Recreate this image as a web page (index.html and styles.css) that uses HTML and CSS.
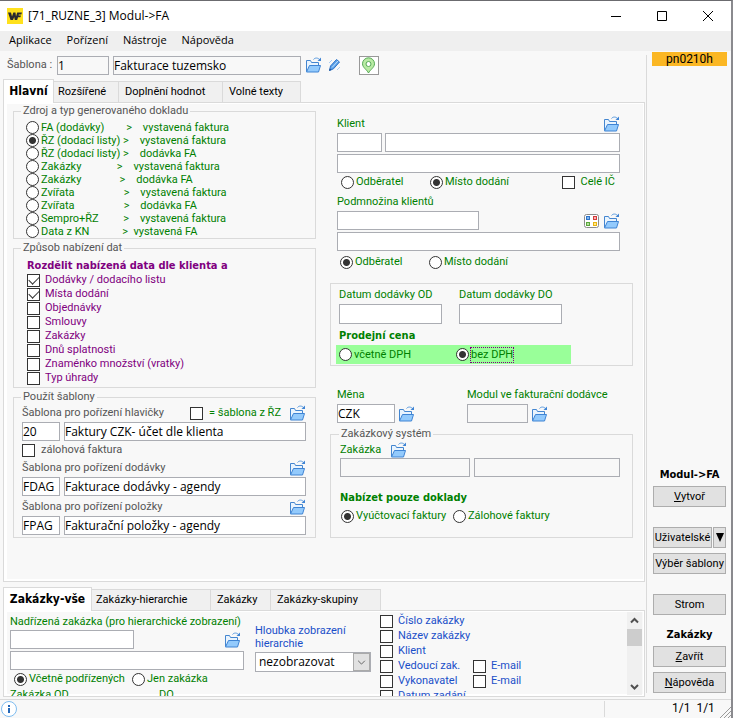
FILE: index.html
```html
<!DOCTYPE html>
<html lang="cs">
<head>
  <meta charset="UTF-8">
  <meta name="viewport" content="width=device-width, initial-scale=1.0">
  <title>[71_RUZNE_3] Modul-&gt;FA</title>
  <link rel="stylesheet" href="styles.css">
</head>
<body>
  <svg class="sprite" aria-hidden="true">
    <symbol id="folder" viewBox="0 0 17 16">
      <path d="M1.500 14.500V3.500H5.500L6.500 5.500H13.500V8.500" fill="#e9f4fe" stroke="#4486d0"/>
      <path d="M1.500 15L4.500 8.500H15.500L13.500 15Z" fill="#93cafc" stroke="#3f84d4"/>
      <path d="M8.500 2.500C10 .5 13 .5 15 3" fill="none" stroke="#5a9be0"/>
      <path d="M16 .5V4H12.500Z" fill="#3f84d4"/>
    </symbol>
  </svg>

  <header class="titlebar">
    <svg class="logo" viewBox="0 0 16 16" aria-hidden="true">
      <rect width="16" height="16" fill="#ffe11c"/>
      <path d="M1 4.500H4L5 8.500L6.300 4.500H8.500L9 8.500L10.200 4.500H15L14.300 6.500H11.800L11.600 7.500H14L13.400 9.300H11L10.200 12H7.800L7.200 9L6 12H3.500Z" fill="#2a2a30"/>
    </svg>
    <h1>[71_RUZNE_3] Modul-&gt;FA</h1>
    <button class="win-btn" title="Minimalizovat"><svg viewBox="0 0 10 10"><path d="M0 5.500H10"/></svg></button>
    <button class="win-btn" title="Maximalizovat"><svg viewBox="0 0 10 10"><path d="M.5 .5H9.500V9.500H.5Z"/></svg></button>
    <button class="win-btn" title="Zavřít okno"><svg viewBox="0 0 10 10"><path d="M0 0L10 10M10 0L0 10"/></svg></button>
  </header>

  <nav class="menu">
    <a href="#">Aplikace</a>
    <a href="#">Pořízení</a>
    <a href="#">Nástroje</a>
    <a href="#">Nápověda</a>
  </nav>

  <div class="body">
    <main class="main">
      <div class="toolbar">
        <label for="tplCode">Šablona :</label>
        <input type="text" id="tplCode" class="w-52" value="1" readonly>
        <input type="text" class="w-188" value="Fakturace tuzemsko" aria-label="Název šablony" readonly>
        <button class="icon-btn" title="Otevřít"><svg><use href="#folder"/></svg></button>
        <button class="icon-btn" title="Upravit">
          <svg viewBox="0 0 17 16">
            <path d="M4.500 9L10.500 2.500L13.500 5L7.500 11.800L3.500 13.500Z" fill="#5aa0e8" stroke="#2f74c8"/>
            <path d="M6 10.500L12 4" stroke="#bfe0ff"/>
            <path d="M3 13.800L3.800 11.500L5.500 13Z" fill="#1d4f94"/>
            <path d="M3 6L6 3M11 13L14 10" stroke="#a8cdf4"/>
          </svg>
        </button>
        <button class="pin-btn" title="Mapa">
          <svg viewBox="0 0 17 17">
            <path d="M8.500 16C7 12.800 2.500 10.500 2.500 6.800A6 6 0 0 1 14.500 6.800C14.500 10.500 10 12.800 8.500 16Z" fill="#b9eba4" stroke="#55a955"/>
            <circle cx="8.500" cy="7" r="2.500" fill="#fff" stroke="#55a955"/>
          </svg>
        </button>
      </div>

      <div class="tabs" role="tablist">
        <button role="tab" class="tab active t-51">Hlavní</button>
        <button role="tab" class="tab t-65">Rozšířené</button>
        <button role="tab" class="tab t-104">Doplnění hodnot</button>
        <button role="tab" class="tab t-78">Volné texty</button>
      </div>

      <section class="panel columns">
        <div class="col">
          <fieldset class="green source">
            <legend>Zdroj a typ generovaného dokladu</legend>
            <label><input type="radio" name="src">FA (dodávky)        &gt;    vystavená faktura</label>
            <label><input type="radio" name="src" checked>ŘZ (dodací listy) &gt;    vystavená faktura</label>
            <label><input type="radio" name="src">ŘZ (dodací listy) &gt;    dodávka FA</label>
            <label><input type="radio" name="src">Zakázky             &gt;    vystavená faktura</label>
            <label><input type="radio" name="src">Zakázky              &gt;    dodávka FA</label>
            <label><input type="radio" name="src">Zvířata                  &gt;    vystavená faktura</label>
            <label><input type="radio" name="src">Zvířata                  &gt;    dodávka FA</label>
            <label><input type="radio" name="src">Sempro+ŘZ         &gt;    vystavená faktura</label>
            <label><input type="radio" name="src">Data z KN            &gt;  vystavená FA</label>
          </fieldset>

          <fieldset class="purple split">
            <legend>Způsob nabízení dat</legend>
            <h2>Rozdělit nabízená data dle klienta a</h2>
            <label><input type="checkbox" checked>Dodávky / dodacího listu</label>
            <label><input type="checkbox" checked>Místa dodání</label>
            <label><input type="checkbox">Objednávky</label>
            <label><input type="checkbox">Smlouvy</label>
            <label><input type="checkbox">Zakázky</label>
            <label><input type="checkbox">Dnů splatnosti</label>
            <label><input type="checkbox">Znaménko množství (vratky)</label>
            <label><input type="checkbox">Typ úhrady</label>
          </fieldset>

          <fieldset class="templates">
            <legend>Použít šablony</legend>
            <div class="row head">
              <label for="tHead" class="grow">Šablona pro pořízení hlavičky</label>
              <label class="check green"><input type="checkbox">= šablona z ŘZ</label>
              <button class="icon-btn" title="Otevřít"><svg><use href="#folder"/></svg></button>
            </div>
            <div class="row fields">
              <input type="text" id="tHead" class="w-38" value="20">
              <input type="text" class="grow" value="Faktury CZK- účet dle klienta" aria-label="Název hlavičky">
            </div>
            <div class="row note"><label class="check"><input type="checkbox">zálohová faktura</label></div>
            <div class="row head">
              <label for="tDel" class="grow">Šablona pro pořízení dodávky</label>
              <button class="icon-btn" title="Otevřít"><svg><use href="#folder"/></svg></button>
            </div>
            <div class="row fields">
              <input type="text" id="tDel" class="w-38" value="FDAG">
              <input type="text" class="grow" value="Fakturace dodávky - agendy" aria-label="Název dodávky">
            </div>
            <div class="row head spaced">
              <label for="tItem" class="grow">Šablona pro pořízení položky</label>
              <button class="icon-btn" title="Otevřít"><svg><use href="#folder"/></svg></button>
            </div>
            <div class="row fields">
              <input type="text" id="tItem" class="w-38" value="FPAG">
              <input type="text" class="grow" value="Fakturační položky - agendy" aria-label="Název položky">
            </div>
          </fieldset>
        </div>

        <div class="col green">
          <div class="clients">
            <div class="row head">
              <label for="client" class="grow">Klient</label>
              <button class="icon-btn" title="Otevřít"><svg><use href="#folder"/></svg></button>
            </div>
            <div class="row pair">
              <input type="text" id="client" class="w-45">
              <input type="text" class="grow" aria-label="Název klienta">
            </div>
            <input type="text" class="full" aria-label="Adresa klienta">
            <div class="options">
              <label><input type="radio" name="cl">Odběratel</label>
              <label class="grow"><input type="radio" name="cl" checked>Místo dodání</label>
              <label class="check"><input type="checkbox">Celé IČ</label>
            </div>
            <div class="row head"><label for="subset">Podmnožina klientů</label></div>
            <div class="row">
              <input type="text" id="subset" class="w-142">
              <span class="grow"></span>
              <button class="icon-btn" title="Výběr">
                <svg viewBox="0 0 17 16">
                  <rect x="1.500" y="1.500" width="14" height="13" rx="2" fill="#fff" stroke="#8b8b8b"/>
                  <rect x="3.500" y="3.500" width="3" height="3" fill="#7db4f0" stroke="#2f74c8"/>
                  <rect x="10.500" y="3.500" width="3" height="3" fill="#f9b4b4" stroke="#d23a3a"/>
                  <rect x="3.500" y="9.500" width="3" height="3" fill="#b6e0a0" stroke="#5ba63c"/>
                  <rect x="10.500" y="9.500" width="3" height="3" fill="#ffe88a" stroke="#e8b410"/>
                </svg>
              </button>
              <button class="icon-btn" title="Otevřít"><svg><use href="#folder"/></svg></button>
            </div>
            <input type="text" class="full" aria-label="Popis podmnožiny">
            <div class="options low">
              <label><input type="radio" name="sub" checked>Odběratel</label>
              <label><input type="radio" name="sub">Místo dodání</label>
            </div>
          </div>

          <div class="box dates">
            <div class="date-grid">
              <label for="dFrom">Datum dodávky OD</label>
              <label for="dTo">Datum dodávky DO</label>
              <input type="text" id="dFrom">
              <input type="text" id="dTo">
            </div>
            <h2>Prodejní cena</h2>
            <div class="price">
              <label><input type="radio" name="price">včetně DPH</label>
              <label><input type="radio" name="price" checked><span class="focused">bez DPH</span></label>
            </div>
          </div>

          <div class="currency">
            <label for="cur">Měna</label>
            <label for="mod">Modul ve fakturační dodávce</label>
            <div class="row">
              <input type="text" id="cur" class="w-58" value="CZK">
              <button class="icon-btn" title="Otevřít"><svg><use href="#folder"/></svg></button>
            </div>
            <div class="row">
              <input type="text" id="mod" class="w-61" readonly>
              <button class="icon-btn" title="Otevřít"><svg><use href="#folder"/></svg></button>
            </div>
          </div>

          <fieldset class="orders">
            <legend>Zakázkový systém</legend>
            <div class="row head">
              <label for="ord">Zakázka</label>
              <button class="icon-btn" title="Otevřít"><svg><use href="#folder"/></svg></button>
            </div>
            <div class="row fields">
              <input type="text" id="ord" class="w-130" readonly>
              <input type="text" class="grow" aria-label="Název zakázky" readonly>
            </div>
            <h2>Nabízet pouze doklady</h2>
            <div class="options docs">
              <label><input type="radio" name="docs" checked>Vyúčtovací faktury</label>
              <label><input type="radio" name="docs">Zálohové faktury</label>
            </div>
          </fieldset>
        </div>
      </section>

      <div class="tabs lower" role="tablist">
        <button role="tab" class="tab active t-89">Zakázky-vše</button>
        <button role="tab" class="tab t-119">Zakázky-hierarchie</button>
        <button role="tab" class="tab t-60">Zakázky</button>
        <button role="tab" class="tab t-110">Zakázky-skupiny</button>
      </div>

      <section class="panel filter">
        <div class="parent green">
          <label for="par" class="title">Nadřízená zakázka (pro hierarchické zobrazení)</label>
          <div class="row picker">
            <input type="text" id="par" class="w-124">
            <button class="icon-btn" title="Otevřít"><svg><use href="#folder"/></svg></button>
          </div>
          <input type="text" class="full" aria-label="Název nadřízené zakázky">
          <div class="options">
            <label><input type="radio" name="par" checked>Včetně podřízených</label>
            <label><input type="radio" name="par">Jen zakázka</label>
          </div>
          <div class="range"><span>Zakázka OD</span><span>DO</span></div>
        </div>
        <div class="depth blue">
          <label for="depth">Hloubka zobrazení hierarchie</label>
          <div class="select">
            <select id="depth"><option>nezobrazovat</option></select>
            <svg viewBox="0 0 17 19" aria-hidden="true"><path d="M4.500 8L8.500 12L12.500 8" fill="none" stroke="#505050"/></svg>
          </div>
        </div>
        <div class="shown blue">
          <label class="check wide"><input type="checkbox">Číslo zakázky</label>
          <label class="check wide"><input type="checkbox">Název zakázky</label>
          <label class="check wide"><input type="checkbox">Klient</label>
          <label class="check"><input type="checkbox">Vedoucí zak.</label>
          <label class="check"><input type="checkbox">E-mail</label>
          <label class="check"><input type="checkbox">Vykonavatel</label>
          <label class="check"><input type="checkbox">E-mail</label>
          <label class="check wide"><input type="checkbox">Datum zadání</label>
        </div>
        <div class="scroll" aria-hidden="true">
          <svg viewBox="0 0 15 17"><path d="M4 10.500L7.500 7L11 10.500" fill="none" stroke="#505050" stroke-width="2"/></svg>
          <div class="thumb"></div>
          <svg viewBox="0 0 15 17"><path d="M4 7L7.500 10.500L11 7" fill="none" stroke="#505050" stroke-width="2"/></svg>
        </div>
      </section>
    </main>

    <aside class="side">
      <div class="badge">pn0210h</div>
      <h2>Modul-&gt;FA</h2>
      <button class="btn"><u>V</u>ytvoř</button>
      <div class="combo">
        <button class="btn grow">Uživatelské</button>
        <button class="btn more" title="Další"><svg viewBox="0 0 8 9"><path d="M0 0H8L4 9Z"/></svg></button>
      </div>
      <button class="btn">Výběr šablony</button>
      <button class="btn tree">Strom</button>
      <h2>Zakázky</h2>
      <button class="btn"><u>Z</u>avřít</button>
      <button class="btn help"><u>N</u>ápověda</button>
    </aside>
  </div>

  <footer class="status">
    <svg class="info" viewBox="0 0 16 16" aria-hidden="true">
      <circle cx="8" cy="8" r="7.500" fill="#fff" stroke="#7fbdf0"/>
      <rect x="7" y="4" width="2" height="2" fill="#2468b8"/>
      <rect x="7" y="7" width="2" height="5" fill="#2468b8"/>
    </svg>
    <div class="counts">1/1&nbsp; 1/1</div>
    <svg class="grip" viewBox="0 0 11 11" aria-hidden="true"><path d="M0 11L11 0M4 11L11 4M8 11L11 8" stroke="#9a9a9a"/></svg>
  </footer>
</body>
</html>
```

FILE: styles.css
```css
* {
  box-sizing: border-box;
}

body {
  margin: 0;
  height: 100vh;
  display: flex;
  flex-direction: column;
  overflow: hidden;
  border-top: 1px solid #6b6b6f;
  border-right: 2px solid #8a8a8e;
  background: #f8f8f8;
  color: #555;
  font-family: Roboto, "Noto Sans", sans-serif;
  font-size: 11px;
  line-height: 14px;
}

.sprite {
  display: none;
}

button, input, select {
  font: inherit;
  margin: 0;
}

button {
  background: none;
  border: none;
  padding: 0;
  color: #000;
}

h2 {
  margin: 0;
  font-family: "DejaVu Sans Condensed", "DejaVu Sans", sans-serif;
  font-size: 11px;
  font-weight: 700;
}

.green { color: #008000; }
.purple { color: #800080; }
.blue { color: #1a4fc8; }

.grow {
  flex: 1;
  min-width: 0;
}

.row {
  display: flex;
  align-items: center;
}

/* title bar and menu */
.titlebar {
  height: 30px;
  flex: none;
  display: flex;
  align-items: center;
  background: #fff;
  padding-left: 7px;
}

.logo {
  width: 16px;
  height: 16px;
}

.titlebar h1 {
  flex: 1;
  margin: 0 0 0 5px;
  font-family: "Open Sans", sans-serif;
  font-size: 12px;
  font-weight: 400;
  color: #000;
}

.win-btn {
  width: 46px;
  height: 30px;
  display: grid;
  place-items: center;
}

.win-btn svg {
  width: 10px;
  height: 10px;
  fill: none;
  stroke: #000;
}

.menu {
  height: 20px;
  flex: none;
  display: flex;
  gap: 15px;
  padding: 0 9px;
  background: #efefef;
  font-family: "Open Sans", sans-serif;
  line-height: 18px;
}

.menu a {
  color: #000;
  text-decoration: none;
}

/* form controls */
input[type="text"] {
  height: 19px;
  border: 1px solid #abadb3;
  border-radius: 0;
  background: #fff;
  padding: 0;
  color: #000;
  font-family: "Open Sans", sans-serif;
  font-size: 12px;
}

input[type="text"][readonly] {
  background: #f8f8f8;
}

input[type="radio"],
input[type="checkbox"] {
  appearance: none;
  flex: none;
  width: 13px;
  height: 13px;
  border: 1px solid #333;
  background: #fff;
}

input[type="radio"] {
  border-radius: 50%;
  margin-right: 2px;
}

input[type="radio"]:checked {
  background: radial-gradient(circle, #333 3px, #fff 4px);
}

input[type="checkbox"]:checked {
  position: relative;
}

input[type="checkbox"]:checked::after {
  content: "";
  position: absolute;
  left: 1px;
  top: 1px;
  width: 9px;
  height: 5px;
  border-left: 1px solid #333;
  border-bottom: 1px solid #333;
  transform: rotate(-45deg);
}

.check {
  display: flex;
  align-items: center;
  gap: 6px;
}

.icon-btn {
  flex: none;
  width: 17px;
  height: 16px;
}

.icon-btn svg {
  display: block;
  width: 17px;
  height: 16px;
}

.full {
  display: block;
  width: 100%;
  margin-top: 2px;
}

.w-38 { width: 38px; }
.w-45 { width: 45px; }
.w-52 { width: 52px; }
.w-58 { width: 58px; }
.w-61 { width: 61px; }
.w-124 { width: 124px; }
.w-130 { width: 130px; }
.w-142 { width: 142px; }
.w-188 { width: 188px; }

/* window body */
.body {
  flex: 1;
  min-height: 0;
  display: flex;
}

.main {
  flex: 1;
  min-width: 0;
  display: flex;
  flex-direction: column;
  padding: 0 1px 2px 3px;
}

.toolbar {
  height: 28px;
  flex: none;
  display: flex;
  align-items: center;
  gap: 4px;
  padding-left: 4px;
}

.toolbar label {
  width: 46px;
  white-space: nowrap;
}

.pin-btn {
  width: 20px;
  height: 19px;
  margin-left: 12px;
  border: 1px solid #999;
  background: #fff;
}

.pin-btn svg {
  display: block;
  width: 17px;
  height: 17px;
}

.tabs {
  height: 24px;
  flex: none;
  display: flex;
  align-items: flex-end;
  margin-bottom: -1px;
  position: relative;
  z-index: 1;
}

.tab {
  height: 22px;
  border: 1px solid #dadada;
  border-left: none;
  background: #f0f0f0;
  padding: 0 0 0 4px;
  text-align: left;
  white-space: nowrap;
}

.tab.active {
  height: 24px;
  border-left: 1px solid #dadada;
  border-bottom: none;
  background: #fff;
  padding: 0 0 2px;
  text-align: center;
  font-family: "DejaVu Sans Condensed", "DejaVu Sans", sans-serif;
  font-size: 12px;
  font-weight: 700;
}

.tab.t-51 { width: 51px; }
.tab.t-60 { width: 60px; padding-left: 6px; }
.tab.t-65 { width: 65px; }
.tab.t-78 { width: 78px; padding-left: 6px; }
.tab.t-89 { width: 89px; }
.tab.t-104 { width: 104px; padding-left: 6px; }
.tab.t-110 { width: 110px; padding-left: 6px; }
.tab.t-119 { width: 119px; }

.lower {
  margin-top: 5px;
}

.panel {
  border: 1px solid #dadada;
  box-shadow: inset 3px 1px #fff, inset -1px -2px #fff;
}

.columns {
  display: grid;
  grid-template-columns: 1fr 1fr;
  gap: 14px;
  padding: 1px 11px 43px 9px;
}

.col {
  min-width: 0;
}

fieldset,
.box {
  margin: 0;
  min-width: 0;
  border: 1px solid #dadada;
  padding: 3px 0 0 12px;
}

fieldset + fieldset {
  margin-top: 2px;
}

legend {
  margin-left: -5px;
  padding: 0 2px;
  color: #555;
}

.source label {
  display: flex;
  align-items: center;
  height: 13px;
  line-height: 13px;
  white-space: pre;
}

.split {
  padding: 3px 0 2px 13px;
}

.split legend {
  margin-left: -6px;
}

.split h2 {
  line-height: 15px;
}

.split label {
  display: flex;
  align-items: center;
  gap: 5px;
  height: 14px;
}

.templates {
  padding: 0 9px 2px 8px;
}

.templates legend,
.orders legend {
  margin-left: -1px;
}

.head {
  height: 18px;
}

.fields {
  gap: 4px;
}

.templates .head {
  gap: 8px;
}

.note {
  height: 18px;
}

.spaced {
  margin-top: 2px;
}

.clients {
  padding: 11px 13px 0 7px;
}

.pair {
  gap: 2px;
}

.options {
  display: flex;
  align-items: center;
  height: 18px;
  padding-left: 4px;
}

.options label,
.price label {
  display: flex;
  align-items: center;
}

.options label:first-child {
  width: 89px;
}

.clients .options .check {
  margin-right: 5px;
}

.clients .options + .head {
  margin-top: 2px;
}

.clients .low {
  margin-top: 2px;
  padding-left: 3px;
}

.clients .row {
  column-gap: 3px;
}

.box {
  padding: 4px 0 1px 8px;
}

.dates {
  margin-top: 12px;
}

.date-grid {
  display: grid;
  grid-template-columns: 103px 103px;
  column-gap: 17px;
}

.date-grid label {
  height: 16px;
}

.date-grid input {
  width: 100%;
  height: 20px;
}

.dates h2 {
  margin-top: 3px;
  line-height: 18px;
}

.price {
  display: flex;
  height: 19px;
  width: 235px;
  margin-left: -3px;
  padding-left: 3px;
  background: #99ff99;
}

.price label:first-child {
  width: 117px;
}

.focused {
  outline: 1px dotted #800080;
}

.currency {
  display: grid;
  grid-template-columns: 130px 1fr;
  margin-top: 22px;
  padding-left: 7px;
}

.currency > label {
  height: 16px;
}

.currency .row {
  gap: 3px;
}

.orders {
  margin-top: 4px;
  padding: 0 12px 12px 9px;
}

.orders .head {
  height: 17px;
  gap: 9px;
}

.orders h2 {
  margin-top: 12px;
  line-height: 18px;
}

.docs {
  padding-left: 1px;
}

.docs label:first-child {
  width: 112px;
}

/* lower filter */
.filter {
  flex: 1;
  min-height: 0;
  display: flex;
  overflow: hidden;
  padding: 1px 2px 1px 6px;
}

.parent {
  width: 234px;
  flex: none;
}

.parent .title {
  display: block;
  height: 18px;
  padding-top: 3px;
  white-space: nowrap;
}

.parent .options label:first-child {
  width: 118px;
}

.picker {
  justify-content: space-between;
  padding-right: 3px;
}

.range {
  display: flex;
}

.range span:first-child {
  width: 149px;
}

.depth {
  width: 116px;
  flex: none;
  margin: 12px 9px 0 11px;
  line-height: 13px;
}

.depth > label {
  display: block;
  margin-bottom: 2px;
}

.select {
  display: flex;
  height: 20px;
  border: 1px solid #abadb3;
  background: #fff;
}

.select select {
  flex: 1;
  min-width: 0;
  appearance: none;
  border: none;
  background: none;
  padding: 0 3px 2px;
  color: #000;
  font-family: "Open Sans", sans-serif;
  font-size: 12px;
}

.select svg {
  width: 17px;
  height: 18px;
  border: 1px solid #aaa;
  background: #e1e1e1;
}

.shown {
  flex: 1;
  display: grid;
  grid-template-columns: 93px 1fr;
  grid-auto-rows: 14px;
  align-content: start;
  row-gap: 1px;
  padding-top: 2px;
}

.shown .check {
  gap: 5px;
}

.wide {
  grid-column: 1 / -1;
}

.scroll {
  width: 15px;
  display: flex;
  flex-direction: column;
  background: #f0f0f0;
}

.scroll svg {
  height: 17px;
}

.scroll svg:last-child {
  margin-top: auto;
}

.thumb {
  height: 17px;
  background: #cdcdcd;
}

/* right side */
.side {
  width: 85px;
  flex: none;
  display: flex;
  flex-direction: column;
  margin: 4px 0 6px;
  padding: 0 5px 0 6px;
  border-left: 1px solid #dadada;
  color: #000;
}

.badge {
  margin: -3px -1px auto;
  background: #fbb724;
  text-align: center;
  font-size: 12px;
}

.side h2 {
  margin-bottom: 4px;
  text-align: center;
}

.btn {
  height: 21px;
  border: 1px solid #adadad;
  background: #e1e1e1;
  text-align: center;
  white-space: nowrap;
}

.combo {
  display: flex;
  margin: 20px 0 5px;
}

.more {
  width: 13px;
  margin-left: 1px;
}

.more svg {
  display: block;
  width: 8px;
  height: 9px;
  margin: 0 auto;
}

.tree {
  margin: 20px 0 13px;
}

.help {
  margin-top: 5px;
}

/* status bar */
.status {
  height: 19px;
  flex: none;
  display: flex;
  align-items: center;
  border-top: 1px solid #dadada;
  padding-left: 1px;
  color: #000;
}

.info {
  width: 16px;
  height: 16px;
}

.counts {
  width: 116px;
  height: 16px;
  margin-left: auto;
  border-left: 1px solid #dadada;
  padding-left: 67px;
  font-size: 12px;
}

.grip {
  width: 11px;
  height: 11px;
  align-self: flex-end;
}
```
